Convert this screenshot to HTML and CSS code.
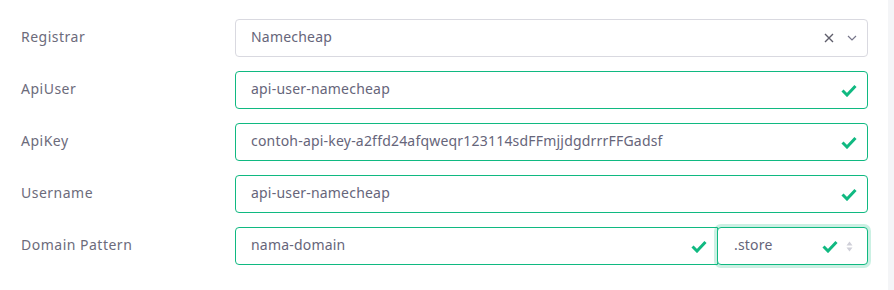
FILE: index.html
```html
<!DOCTYPE html>
<html>

<head>
    <link rel="stylesheet" href="styles.css">
</head>

<body>

    <div class="form">
        <div class="row">
            <label>Registrar</label>
            <div class="field select">
                <span class="value">Namecheap</span>
                <span class="icons">
                    <svg width="10" height="10" viewBox="0 0 10 10"><path d="M1 1 L9 9 M9 1 L1 9" stroke="#5f5e6b" stroke-width="1.4" fill="none"/></svg>
                    <svg width="10" height="6" viewBox="0 0 10 6"><path d="M1 1 L5 5 L9 1" stroke="#77768a" stroke-width="1.2" fill="none"/></svg>
                </span>
            </div>
        </div>
        <div class="row">
            <label>ApiUser</label>
            <div class="field valid">
                <span class="value">api-user-namecheap</span>
                <svg class="check" width="16" height="13" viewBox="0 0 16 13"><path d="M1.5 6.5 L6 11 L14.5 2" stroke="#10b981" stroke-width="3" fill="none"/></svg>
            </div>
        </div>
        <div class="row">
            <label>ApiKey</label>
            <div class="field valid">
                <span class="value">contoh-api-key-a2ffd24afqweqr123114sdFFmjjdgdrrrFFGadsf</span>
                <svg class="check" width="16" height="13" viewBox="0 0 16 13"><path d="M1.5 6.5 L6 11 L14.5 2" stroke="#10b981" stroke-width="3" fill="none"/></svg>
            </div>
        </div>
        <div class="row">
            <label>Username</label>
            <div class="field valid">
                <span class="value">api-user-namecheap</span>
                <svg class="check" width="16" height="13" viewBox="0 0 16 13"><path d="M1.5 6.5 L6 11 L14.5 2" stroke="#10b981" stroke-width="3" fill="none"/></svg>
            </div>
        </div>
        <div class="row">
            <label>Domain Pattern</label>
            <div class="group">
                <div class="field valid domain">
                    <span class="value">nama-domain</span>
                    <svg class="check" width="16" height="13" viewBox="0 0 16 13"><path d="M1.5 6.5 L6 11 L14.5 2" stroke="#10b981" stroke-width="3" fill="none"/></svg>
                </div>
                <div class="field valid tld">
                    <span class="value">.store</span>
                    <span class="icons">
                        <svg class="check" width="16" height="13" viewBox="0 0 16 13"><path d="M1.5 6.5 L6 11 L14.5 2" stroke="#10b981" stroke-width="3" fill="none"/></svg>
                        <svg width="7" height="11" viewBox="0 0 7 11"><path d="M0.5 4.5 L3.5 0.5 L6.5 4.5 Z M0.5 6.5 L3.5 10.5 L6.5 6.5 Z" fill="#cfcfd8"/></svg>
                    </span>
                </div>
            </div>
        </div>
    </div>

</body>

</html>
```

FILE: styles.css
```css
body {
    margin: 0;
    background-color: #f4f5f7;
    font-family: "Noto Sans", sans-serif;
}

.form {
    width: 888px;
    height: 290px;
    box-sizing: border-box;
    background-color: #fff;
    padding: 19px 20px 0 21px;
    display: flex;
    flex-direction: column;
    gap: 14px;
}

.row {
    display: flex;
    align-items: center;
}

.row label {
    width: 214px;
    flex-shrink: 0;
    font-size: 14px;
    letter-spacing: 0.5px;
    color: #6c6b7b;
    padding-bottom: 3px;
}

.field {
    flex: 1;
    height: 38px;
    box-sizing: border-box;
    display: flex;
    align-items: center;
    justify-content: space-between;
    padding: 0 10px 0 15px;
    border: 1px solid #d9d9e0;
    border-radius: 4px;
    background-color: #fff;
}

.field .value {
    font-size: 14px;
    letter-spacing: 0.2px;
    color: #66657a;
    white-space: nowrap;
    padding-bottom: 3px;
}

.field.valid {
    border-color: #10b981;
}

.icons {
    display: flex;
    align-items: center;
    gap: 13px;
}

.group {
    flex: 1;
    display: flex;
}

.group .domain {
    border-top-right-radius: 0;
    border-bottom-right-radius: 0;
}

.group .tld {
    flex: 0 0 151px;
    margin-left: -1px;
    padding-left: 16px;
    padding-right: 14px;
    box-shadow: 0 0 0 3px rgba(16, 185, 129, 0.22);
}

.tld .icons {
    gap: 8px;
}
```
